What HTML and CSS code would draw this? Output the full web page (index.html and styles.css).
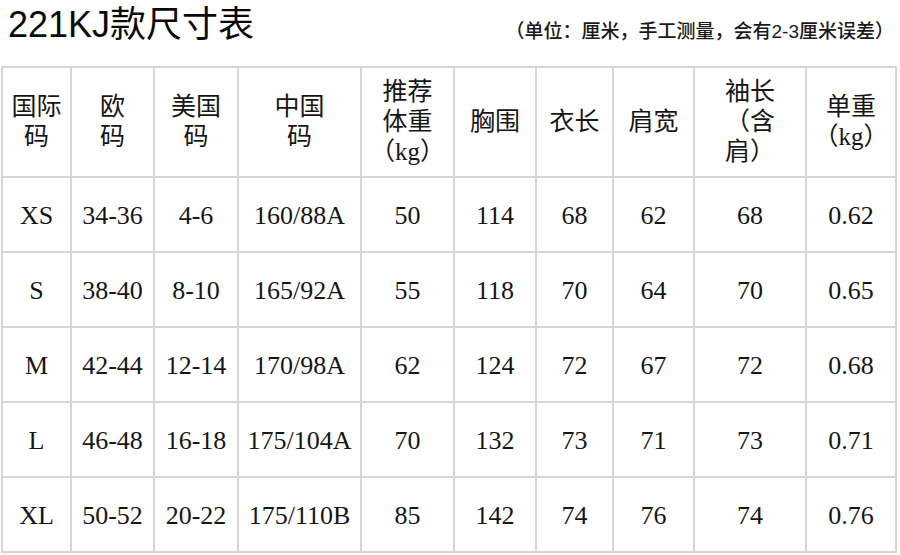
FILE: index.html
```html
<!DOCTYPE html>
<html lang="zh">
<head>
<meta charset="utf-8">
<link rel="stylesheet" href="styles.css">
</head>
<body>
<div class="page">
  <header class="head">
    <h1 class="title">221KJ款尺寸表</h1>
    <p class="note">（单位：厘米，手工测量，会有2-3厘米误差）</p>
  </header>
  <table class="sizes">
    <colgroup>
      <col class="c1"><col class="c2"><col class="c3"><col class="c4"><col class="c5">
      <col class="c6"><col class="c7"><col class="c8"><col class="c9"><col class="c10">
    </colgroup>
    <thead>
      <tr>
        <th>国际<br>码</th>
        <th>欧<br>码</th>
        <th>美国<br>码</th>
        <th>中国<br>码</th>
        <th>推荐<br>体重<br>（kg）</th>
        <th>胸围</th>
        <th>衣长</th>
        <th>肩宽</th>
        <th>袖长<br>（含<br>肩）</th>
        <th>单重<br>（kg）</th>
      </tr>
    </thead>
    <tbody>
      <tr><td>XS</td><td>34-36</td><td>4-6</td><td>160/88A</td><td>50</td><td>114</td><td>68</td><td>62</td><td>68</td><td>0.62</td></tr>
      <tr><td>S</td><td>38-40</td><td>8-10</td><td>165/92A</td><td>55</td><td>118</td><td>70</td><td>64</td><td>70</td><td>0.65</td></tr>
      <tr><td>M</td><td>42-44</td><td>12-14</td><td>170/98A</td><td>62</td><td>124</td><td>72</td><td>67</td><td>72</td><td>0.68</td></tr>
      <tr><td>L</td><td>46-48</td><td>16-18</td><td>175/104A</td><td>70</td><td>132</td><td>73</td><td>71</td><td>73</td><td>0.71</td></tr>
      <tr><td>XL</td><td>50-52</td><td>20-22</td><td>175/110B</td><td>85</td><td>142</td><td>74</td><td>76</td><td>74</td><td>0.76</td></tr>
    </tbody>
  </table>
</div>
</body>
</html>
```

FILE: styles.css
```css
html, body {
  margin: 0;
  padding: 0;
  background: #ffffff;
}

.page {
  width: 900px;
  height: 555px;
  overflow: hidden;
  color: #111111;
}

.head {
  height: 66px;
  display: flex;
  justify-content: space-between;
  align-items: flex-start;
  padding: 0 6px 0 8px;
  box-sizing: border-box;
}

.title {
  margin: 3px 0 0;
  font-family: "Liberation Sans", "Noto Sans CJK SC", sans-serif;
  font-size: 36px;
  font-weight: normal;
  line-height: 44px;
  color: #0a0a0a;
}

.note {
  margin: 20px 0 0;
  font-family: "Liberation Sans", "Noto Sans CJK SC", sans-serif;
  font-size: 19px;
  line-height: 24px;
  font-weight: 500;
  color: #1a1a1a;
}

.sizes {
  margin-left: 1px;
  width: 896px;
  border-collapse: collapse;
  table-layout: fixed;
  font-family: "Liberation Serif", "Noto Sans CJK SC", serif;
  color: #161616;
}

.sizes th,
.sizes td {
  border: 2px solid #d6d6d6;
  text-align: center;
  vertical-align: middle;
  padding: 0;
}

.sizes th {
  height: 108px;
  font-size: 25px;
  line-height: 30px;
  font-weight: normal;
  font-family: "Liberation Serif", "Noto Sans CJK SC", serif;
}

.sizes td {
  height: 71px;
  padding-top: 2px;
  font-size: 26px;
  line-height: 30px;
}

.c1 { width: 69px; }
.c2 { width: 83px; }
.c3 { width: 84px; }
.c4 { width: 123px; }
.c5 { width: 93px; }
.c6 { width: 82px; }
.c7 { width: 77px; }
.c8 { width: 81px; }
.c9 { width: 112px; }
.c10 { width: 90px; }
```
